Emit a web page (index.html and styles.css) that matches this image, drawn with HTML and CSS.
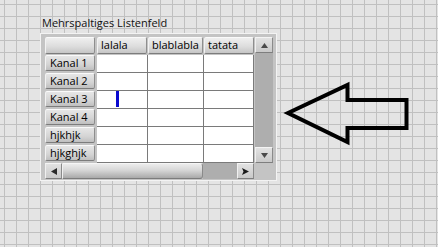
FILE: index.html
```html
<!DOCTYPE html>
<html lang="de">
<head>
<meta charset="utf-8">
<title>Mehrspaltiges Listenfeld</title>
<link rel="stylesheet" href="styles.css">
</head>
<body>
<div class="canvas">
  <div class="control">
    <div class="title">Mehrspaltiges Listenfeld</div>
    <div class="listbox">
      <div class="lb-grid">
        <div class="hdr corner"></div>
        <div class="colhdrs">
          <div class="hdr ch w1">lalala</div>
          <div class="hdr ch w2">blablabla</div>
          <div class="hdr ch w3">tatata</div>
        </div>
        <div class="vscroll">
          <div class="sbtn">
            <svg width="7" height="5" viewBox="0 0 7 5"><polygon points="3.5,0 7,5 0,5" fill="#4a4a4a"/></svg>
          </div>
          <div class="vtrack"></div>
          <div class="sbtn">
            <svg width="7" height="5" viewBox="0 0 7 5"><polygon points="0,0 7,0 3.5,5" fill="#4a4a4a"/></svg>
          </div>
        </div>
        <div class="rowhdrs">
          <div class="hdr rh">Kanal 1</div>
          <div class="hdr rh">Kanal 2</div>
          <div class="hdr rh">Kanal 3</div>
          <div class="hdr rh">Kanal 4</div>
          <div class="hdr rh">hjkhjk</div>
          <div class="hdr rh">hjkghjk</div>
        </div>
        <div class="cells">
          <div class="row"><div class="cell w1"></div><div class="cell w2"></div><div class="cell w3"></div></div>
          <div class="row"><div class="cell w1"></div><div class="cell w2"></div><div class="cell w3"></div></div>
          <div class="row"><div class="cell w1"><span class="cursor"></span></div><div class="cell w2"></div><div class="cell w3"></div></div>
          <div class="row"><div class="cell w1"></div><div class="cell w2"></div><div class="cell w3"></div></div>
          <div class="row"><div class="cell w1"></div><div class="cell w2"></div><div class="cell w3"></div></div>
          <div class="row"><div class="cell w1"></div><div class="cell w2"></div><div class="cell w3"></div></div>
        </div>
        <div class="hscroll">
          <div class="sbtn hbtn">
            <svg width="6" height="7" viewBox="0 0 6 7"><polygon points="0,3.5 6,0 6,7" fill="#2a2a2a"/></svg>
          </div>
          <div class="thumb"></div>
          <div class="htrack"></div>
          <div class="sbtn hbtn">
            <svg width="7" height="7" viewBox="0 0 7 7"><polygon points="7,3.5 0,0 1.5,3.5 0,7" fill="#1a1a1a"/></svg>
          </div>
        </div>
      </div>
    </div>
  </div>
  <svg class="arrow" width="130" height="68" viewBox="0 0 130 68">
    <polygon points="5,32 64.5,4 64.5,19 123.5,19 123.5,47 64.5,47 64.5,61" fill="none" stroke="#000" stroke-width="4" stroke-linejoin="miter"/>
  </svg>
</div>
</body>
</html>
```

FILE: styles.css
```css
* { box-sizing: border-box; }

html, body {
  margin: 0;
  padding: 0;
}

body {
  font-family: "Open Sans", "DejaVu Sans", sans-serif;
  font-size: 11px;
  color: #000;
}

.canvas {
  width: 438px;
  height: 247px;
  background-color: #e4e4e4;
  background-image:
    linear-gradient(to right, #c0c0c0 0, #c0c0c0 1px, transparent 1px),
    linear-gradient(to bottom, #c0c0c0 0, #c0c0c0 1px, transparent 1px);
  background-size: 12px 12px;
  background-position: 4px 4px;
  padding: 14px 0 0 40px;
  display: flex;
  align-items: flex-start;
}

.control {
  width: 237px;
}

.title {
  height: 19px;
  line-height: 15px;
  padding: 1px 0 0 2px;
  color: #111;
  white-space: nowrap;
}

.listbox {
  width: 237px;
  height: 148px;
  border: 1px solid #f3f3f3;
  background: #c4c4c4;
  padding: 3px 3px 1px 4px;
}

.lb-grid {
  display: grid;
  grid-template-columns: 52px 157px 19px;
  grid-template-rows: 18px 108px 16px;
}

.hdr {
  background: linear-gradient(to bottom, #efefef 0%, #dddddd 55%, #c6c6c6 100%);
  border: 1px solid;
  border-color: #fafafa #8e8e8e #7c7c7c #f2f2f2;
  border-radius: 2px;
  white-space: nowrap;
  overflow: hidden;
}

.corner {
  grid-column: 1;
  grid-row: 1;
  width: 50px;
  height: 17px;
}

.colhdrs {
  grid-column: 2;
  grid-row: 1;
  display: flex;
  gap: 1px;
  height: 17px;
}

.ch {
  height: 17px;
  line-height: 14px;
  padding-left: 3px;
}

.colhdrs .w1 { width: 50px; }
.colhdrs .w2 { width: 55px; }
.colhdrs .w3 { width: 50px; }

.vscroll {
  grid-column: 3;
  grid-row: 1 / span 2;
  justify-self: end;
  width: 18px;
  display: flex;
  flex-direction: column;
  background: #adadad;
}

.sbtn {
  width: 18px;
  height: 16px;
  flex: none;
  display: flex;
  align-items: center;
  justify-content: center;
  background: linear-gradient(to bottom, #e2e2e2, #c9c9c9);
  border: 1px solid;
  border-color: #f4f4f4 #8a8a8a #7e7e7e #f0f0f0;
}

.vtrack {
  flex: 1;
  background: #aeaeae;
}

.rowhdrs {
  grid-column: 1;
  grid-row: 2;
  display: flex;
  flex-direction: column;
  gap: 2px;
  width: 50px;
}

.rh {
  height: 16px;
  line-height: 14px;
  padding-left: 4px;
  background: linear-gradient(to bottom, #e6e6e6 0%, #d4d4d4 60%, #bfbfbf 100%);
}

.cells {
  grid-column: 2;
  grid-row: 2;
  background: #fff;
  display: flex;
  flex-direction: column;
}

.row {
  display: flex;
  height: 18px;
  border-bottom: 1px solid #7a7a7a;
}

.cell {
  height: 17px;
  border-right: 1px solid #7a7a7a;
}

.cells .w1 { width: 51px; }
.cells .w2 { width: 56px; }
.cells .w3 { width: 50px; }

.cursor {
  display: inline-block;
  width: 3px;
  height: 16px;
  margin: 0 0 0 19px;
  background: #0a0ad0;
  vertical-align: top;
}

.hscroll {
  grid-column: 1 / span 2;
  grid-row: 3;
  display: flex;
  height: 16px;
}

.hbtn {
  width: 17px;
}

.thumb {
  width: 141px;
  background: linear-gradient(to bottom, #ececec 0%, #d6d6d6 45%, #a9a9a9 100%);
  border: 1px solid;
  border-color: #f6f6f6 #8a8a8a #7c7c7c #f0f0f0;
  border-radius: 0 3px 3px 0;
}

.htrack {
  flex: 1;
  background: #aeaeae;
}

.arrow {
  flex: none;
  margin: 67px 0 0 6px;
}
```
